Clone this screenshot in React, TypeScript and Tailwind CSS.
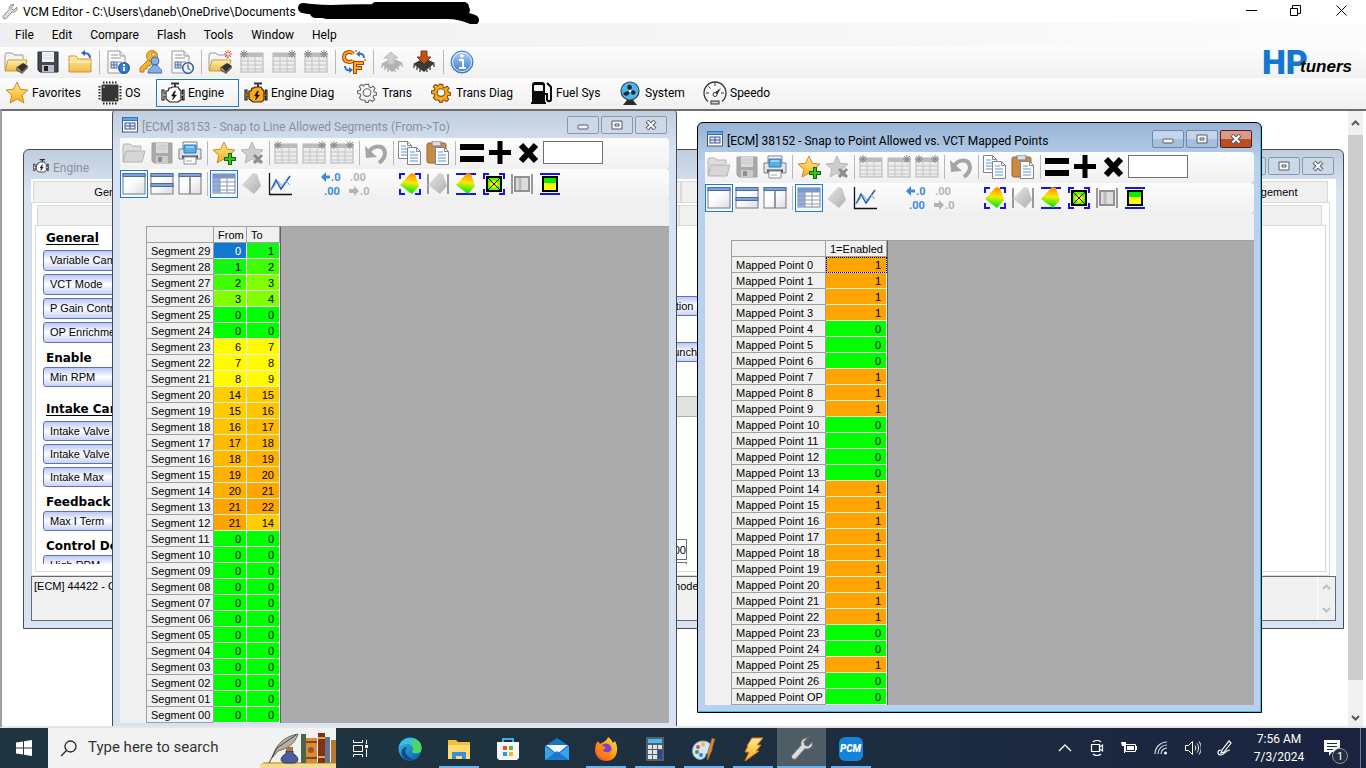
import type { ReactNode } from "react";
import { clsx } from "clsx";

type SvgProps = { children: ReactNode; size?: string; box?: string };

function Svg({ children, size = "size-6", box = "0 0 24 24" }: SvgProps) {
    return (
        <svg viewBox={box} className={clsx("shrink-0", size)} fill="none" aria-hidden="true">
            {children}
        </svg>
    );
}

// Gradients shared by all icons
function Gradients() {
    return (
        <svg className="absolute size-0" aria-hidden="true">
            <defs>
                <linearGradient id="folder" x1="0" y1="0" x2="0" y2="1">
                    <stop offset="0" stopColor="#fff0a8" />
                    <stop offset="1" stopColor="#eebb48" />
                </linearGradient>
                <linearGradient id="star" x1="0" y1="0" x2="0" y2="1">
                    <stop offset="0" stopColor="#ffe993" />
                    <stop offset="1" stopColor="#f3ae1c" />
                </linearGradient>
                <linearGradient id="blue" x1="0" y1="0" x2="0" y2="1">
                    <stop offset="0" stopColor="#b5d3f5" />
                    <stop offset="1" stopColor="#3977c6" />
                </linearGradient>
                <linearGradient id="surface" x1="0.6" y1="0" x2="0.5" y2="1">
                    <stop offset="0.1" stopColor="#ff9c00" />
                    <stop offset="0.45" stopColor="#ffe600" />
                    <stop offset="0.7" stopColor="#6cf000" />
                    <stop offset="1" stopColor="#00dc10" />
                </linearGradient>
                <linearGradient id="grey" x1="0" y1="0" x2="1" y2="1">
                    <stop offset="0" stopColor="#e6e6e6" />
                    <stop offset="1" stopColor="#b0b0b0" />
                </linearGradient>
                <linearGradient id="pane" x1="0" y1="0" x2="1" y2="1">
                    <stop offset="0.4" stopColor="#ffffff" />
                    <stop offset="1" stopColor="#dcdce2" />
                </linearGradient>
                <linearGradient id="edge" x1="0" y1="0" x2="1" y2="1">
                    <stop offset="0" stopColor="#35c1f1" />
                    <stop offset="1" stopColor="#0c59a4" />
                </linearGradient>
                <linearGradient id="fox" x1="1" y1="0" x2="0" y2="1">
                    <stop offset="0" stopColor="#ffe04a" />
                    <stop offset="0.5" stopColor="#ff980e" />
                    <stop offset="1" stopColor="#f0304b" />
                </linearGradient>
            </defs>
        </svg>
    );
}

const STAR = "M12 1l3.2 7.2 7.8.8-5.8 5.2 1.7 7.8L12 18l-6.9 4 1.7-7.8L1 9l7.8-.8z";

function TinyChip() {
    return (
        <>
            <path d="M13 17l6-4 5 3-6 6z" fill="#333" />
            <path d="M13 17v3l5 3v-2M18 23l6-6" stroke="#666" strokeWidth="1.500" />
        </>
    );
}

function OpenFolder({ grey = false }: { grey?: boolean }) {
    return (
        <>
            <path d="M1 20V5l1-2h6l2 2h9v4" fill={grey ? "#dedede" : "#f5f5f5"} stroke={grey ? "#b4b4b4" : "#999"} />
            <path d="M1 21l3-11h19l-3 11z" fill={grey ? "#d6d6d6" : "url(#folder)"} stroke={grey ? "#b4b4b4" : "#c99b36"} />
        </>
    );
}

function FolderChipIcon({ spark = false }: { spark?: boolean }) {
    return (
        <Svg>
            <OpenFolder />
            <TinyChip />
            {spark && (
                <>
                    <path d="M20 0v8M16 4h8M17 1l6 6M23 1l-6 6" stroke="#c2552a" />
                    <circle cx="20" cy="4" r="1.500" fill="#f5dccf" />
                </>
            )}
        </Svg>
    );
}

function SaveIcon({ grey = false }: { grey?: boolean }) {
    return (
        <Svg>
            <path d="M2 2h20v20H4l-2-2z" fill={grey ? "#a9a9a9" : "#46484f"} stroke={grey ? "#9f9f9f" : "#26272b"} />
            <rect x="6" y="2" width="12" height="10" fill={grey ? "#dadada" : "#f2f5f8"} />
            <path d="M7 5h10M7 8h10" stroke={grey ? "#c4c4c4" : "#cdd8e4"} />
            <rect x="6" y="15" width="12" height="7" fill={grey ? "#cacaca" : "#b8c0ca"} />
            <rect x="8" y="16" width="4" height="5" fill={grey ? "#8f8f8f" : "#222"} />
        </Svg>
    );
}

function FolderBackIcon() {
    return (
        <Svg>
            <path d="M1 22V6h7l2 3h13v13z" fill="url(#folder)" stroke="#c99b36" />
            <path d="M1 12h22" stroke="#fff8d2" />
            <path d="M22 8c0-4-2-5-6-5" stroke="#2a69b4" strokeWidth="2" />
            <path d="M17 0v6l-4-3z" fill="#2a69b4" />
        </Svg>
    );
}

function SheetIcon({ clock = false }: { clock?: boolean }) {
    return (
        <Svg>
            <path d="M2 1h12l5 5v17H2z" fill="#fafafa" stroke="#9b9b9b" />
            <path d="M14 1v5h5" stroke="#9b9b9b" fill="#e8e8e8" />
            <path d="M5 5h7M5 8h10M12 12h4" stroke="#999" />
            <rect x="5" y="12" width="6" height="6" fill="#dce8f6" stroke="#4d6c96" />
            <path d="M5 15h6M8 12v6" stroke="#4d6c96" />
            <circle cx="18" cy="18" r="5.3" fill={clock ? "#f2f7fd" : "#2f7ed8"} stroke="#2c61a5" strokeWidth="1.5" />
            {clock ? (
                <path d="M18 14.500v4l2.500 1.500" stroke="#333" />
            ) : (
                <path d="M18 17v4M18 14v2" stroke="#fff" strokeWidth="2" />
            )}
        </Svg>
    );
}

function KeyUserIcon() {
    return (
        <Svg>
            <path d="M12 8L2 18v4h4v-3h3v-3h3l3-4" fill="#f2b632" stroke="#b97c12" />
            <circle cx="14" cy="6" r="5.500" fill="#f2b632" stroke="#b97c12" />
            <circle cx="15.500" cy="4.500" r="1.800" fill="#fff" stroke="#b97c12" />
            <circle cx="17" cy="11" r="4" fill="#86aee0" stroke="#3f6cae" />
            <path d="M10 23c0-5 3-4 5-8h4c2 4 5 3 5 8z" fill="#86aee0" stroke="#3f6cae" />
        </Svg>
    );
}

function GridIcon({ left = false, right = false }: { left?: boolean; right?: boolean }) {
    return (
        <Svg>
            <rect x="1" y="3" width="22" height="19" fill="#ececec" stroke="#b4b4b4" />
            <rect x="1" y="3" width="22" height="4" fill="#bcbcbc" />
            <path d="M1 11h22M1 15h22M1 19h22M8 7v15M15 7v15" stroke="#c4c4c4" />
            {left && <path d="M4 0v8M0 4h8M1 1l6 6M7 1L1 7" stroke="#868686" />}
            {right && <path d="M20 0v8M16 4h8M17 1l6 6M23 1l-6 6" stroke="#868686" />}
        </Svg>
    );
}

function DegreesIcon() {
    return (
        <Svg>
            <path d="M11 4c-1-3-9-3-9 3s8 6 9 3" stroke="#a53e13" strokeWidth="4" />
            <path d="M11 4c-1-3-9-3-9 3s8 6 9 3" stroke="#ffab19" strokeWidth="2" />
            <path d="M13 24V13h9M13 18h7" stroke="#a53e13" strokeWidth="4" />
            <path d="M13 23V13h8M13 18h6" stroke="#ffab19" strokeWidth="2" />
            <path d="M17 4c3-1 5 1 5 4M3 16c0 3 2 5 5 4" stroke="#356fbd" strokeWidth="2" />
            <path d="M18 1v6l-4-3zM7 17v6l4-3z" fill="#356fbd" />
            <circle cx="14" cy="1" r="1" fill="#d46622" />
            <circle cx="23" cy="10" r="1" fill="#d46622" />
        </Svg>
    );
}

function ChipArrowIcon({ grey = false }: { grey?: boolean }) {
    return (
        <Svg>
            <path d="M1 14l11-6 11 5-11 9z" fill={grey ? "#b2b2b2" : "#3a3a3a"} />
            <path d="M2 15v3m3-1v3m3-1v3m7-2v2m3-5v3m4-6v3" stroke={grey ? "#b5b5b5" : "#555"} strokeWidth="1.500" />
            {grey ? (
                <path d="M11 2l7 6h-4v6H8V8H4z" fill="#cfcfcf" stroke="#bdbdbd" />
            ) : (
                <path d="M9 1h6v6h4l-7 7-7-7h4z" fill="#c1531a" stroke="#8a350b" />
            )}
        </Svg>
    );
}

function InfoIcon() {
    return (
        <Svg>
            <circle cx="12" cy="12" r="11" fill="url(#blue)" stroke="#4376b4" />
            <circle cx="12" cy="12" r="9.500" stroke="#d9e8fa" />
            <path d="M9 10h4v8m-4 0h7" stroke="#fff" strokeWidth="2" />
            <circle cx="12" cy="6" r="1.800" fill="#fff" />
        </Svg>
    );
}

function StarIcon({ badge, grey = false }: { badge?: "plus" | "cross"; grey?: boolean }) {
    return (
        <Svg>
            <path d={STAR} fill={grey ? "#cdcdcd" : "url(#star)"} stroke={grey ? "#b5b5b5" : "#c98c25"} />
            {badge === "plus" && <path d="M18 12v12M12 18h12" stroke="#0b6b0b" strokeWidth="4" />}
            {badge === "plus" && <path d="M18 13v10M13 18h10" stroke="#36c41c" strokeWidth="2" />}
            {badge === "cross" && <path d="M14 14l8 8M22 14l-8 8" stroke="#8c8c8c" strokeWidth="3" />}
        </Svg>
    );
}

function ChipIcon() {
    return (
        <Svg>
            <path d="M5 1.500h15M5 22.500h15M1.500 5v15M22.500 5v15" stroke="#222" strokeWidth="2" strokeDasharray="1.500 1.500" />
            <rect x="3.500" y="3.500" width="17" height="17" rx="1" fill="#333635" />
            <circle cx="6" cy="6" r="1" fill="#aaa" />
            <circle cx="18" cy="18" r="1" fill="#aaa" />
        </Svg>
    );
}

function EngineIcon({ fill = "#fff", size = "size-6" }: { fill?: string; size?: string }) {
    return (
        <Svg size={size}>
            <path d="M10 2.500h8M14 2.500V6" stroke="#333" strokeWidth="1.800" />
            <path d="M8 7h2l1-1h6l1 2 2 2v9l-3 2H9l-4-3v-8h2z" fill={fill} stroke="#222" strokeWidth="1.200" />
            <path d="M5 13H3V9H1v10h2v-4h2M20 13h1.500V9H23v10h-1.500v-4H20" fill={fill} stroke="#222" strokeWidth="1.200" />
            <path d="M13.500 10l-3 5h2l-1 4 4-5h-2.500l1.500-4z" fill="#111" stroke="#111" strokeWidth="0.500" />
        </Svg>
    );
}

function GearIcon({ fill = "none", stroke = "#666" }: { fill?: string; stroke?: string }) {
    return (
        <Svg box="-2 -1 28 28">
            <path
                d="M10 3h4l.5 3 2 .8L19 5l2.500 2.500-1.800 2.500.8 2 2.500.5v3l-3 .5-.8 2 1.800 2.500-2.500 2.500-2.500-1.800-2 .8-.5 2h-3l-.5-2-2-.8L5.500 21 3 18.500 4.800 16 4 14l-3-.5v-3L4 10l.8-2L3 5.500 5.500 3 8 4.800z"
                fill={fill}
                stroke={stroke}
                strokeWidth="1.300"
                strokeLinejoin="round"
            />
            <circle cx="12" cy="12.500" r="4.500" fill="#f7f7f7" stroke={stroke} strokeWidth="1.300" />
        </Svg>
    );
}

function FuelIcon() {
    return (
        <Svg>
            <path d="M3 21V4c0-2 1-3 3-3h7c2 0 3 1 3 3v17h1v2H2v-2z" fill="#0a0a0a" />
            <rect x="5" y="4" width="9" height="6" rx="1" fill="#f7f7f7" />
            <path d="M18 2l4 4v12c0 3-4 3-4 0v-5h-2" stroke="#0a0a0a" strokeWidth="2" />
        </Svg>
    );
}

function FanIcon() {
    return (
        <Svg>
            <path d="M9 19h6l4 5H5z" fill="#2b2b2b" />
            <circle cx="12" cy="10" r="9" fill="#4fb4ee" stroke="#33474f" strokeWidth="1.200" />
            <path d="M12 10c-4-2-3-7 0-6s2 4 0 6c4-2 7 1 5 3s-4 0-5-3c0 4-4 6-6 4s2-4 6-4" fill="#1e2a33" />
            <circle cx="12" cy="10" r="1.500" fill="#d8eefc" />
        </Svg>
    );
}

function GaugeIcon() {
    return (
        <Svg>
            <path d="M5 20.500A11 11 0 1119 20.500" stroke="#333" strokeWidth="1.300" />
            <path d="M12 2v3M3 12h3M21 12h-3M5.500 5.500l2 2" stroke="#333" />
            <path d="M18 7l-4 7-3-2z" fill="#333" />
            <circle cx="12" cy="13.500" r="2" stroke="#333" fill="#fff" />
            <rect x="8" y="20" width="8" height="3" fill="#ccc" stroke="#333" />
        </Svg>
    );
}

function PrintIcon() {
    return (
        <Svg>
            <path d="M5 9V1h14v8" fill="#fafafa" stroke="#7c8187" />
            <path d="M1 8h22v10H1z" fill="#e0e4e8" stroke="#7c8187" />
            <path d="M6 4h12v8H6z" fill="#54b1ea" stroke="#2c76b0" />
            <path d="M8 6h8" stroke="#9bd2f4" strokeWidth="2" />
            <path d="M4 16h16" stroke="#4d5359" strokeWidth="3" />
            <path d="M6 16h12v7H6z" fill="#fbfbfb" stroke="#8e9398" />
            <path d="M8 20h6" stroke="#aaa" />
        </Svg>
    );
}

function UndoIcon() {
    return (
        <Svg>
            <path d="M5 11c4-7 15-8 16 1 0 4-2 7-6 10" stroke="#a5a5a5" strokeWidth="4" />
            <path d="M1 5l1 12 11-1z" fill="#a5a5a5" />
        </Svg>
    );
}

function Sheet({ x, y }: { x: number; y: number }) {
    return (
        <g transform={`translate(${x} ${y})`}>
            <path d="M.5.500h9l4 4v13H.5z" fill="#fdfdfd" stroke="#7f858d" />
            <path d="M9.500.500v4h4" stroke="#7f858d" />
            <path d="M3 5h5M3 8h8M3 11h8M3 14h8" stroke="#5e93d3" />
        </g>
    );
}

function CopyIcon() {
    return (
        <Svg>
            <Sheet x={0} y={0} />
            <Sheet x={9} y={6} />
        </Svg>
    );
}

function PasteIcon() {
    return (
        <Svg>
            <rect x="1" y="2" width="19" height="20" rx="2" fill="#cb8a43" stroke="#98612a" />
            <rect x="6" y="0" width="9" height="5" rx="1" fill="#dadde0" stroke="#787d83" />
            <Sheet x={9} y={6} />
        </Svg>
    );
}

function PaneIcon({ split }: { split?: "rows" | "cols" }) {
    return (
        <Svg>
            <rect x="1" y="2" width="22" height="20" fill="url(#pane)" stroke="#77797f" />
            <rect x="1" y="1.500" width="22" height="3" fill="#7fa0da" stroke="#4a6cab" />
            {split === "rows" && <rect x="1" y="11.500" width="22" height="3" fill="#7fa0da" stroke="#4a6cab" />}
            {split === "cols" && <path d="M12 4v18" stroke="#77797f" strokeWidth="1.500" />}
        </Svg>
    );
}

function TableViewIcon() {
    return (
        <Svg>
            <rect x="1" y="2" width="22" height="19" fill="#fff" stroke="#7d828e" />
            <rect x="1" y="2" width="22" height="4" fill="#7397d5" />
            <rect x="1" y="6" width="7" height="15" fill="#94afe2" />
            <path d="M1 6h22M1 10h22M1 14h22M1 18h22M8 2v19M15 2v19" stroke="#8f97b0" />
        </Svg>
    );
}

const SURFACE = "M13 1l4 1 4 12-7 8L2 13z";

type Edge = "corners" | "sides" | "bars";

function EdgeMarks({ edge, color = "#1414f0" }: { edge: Edge; color?: string }) {
    const d = {
        corners: "M2 7V2h5M17 2h5v5M22 17v5h-5M7 22H2v-5",
        sides: "M2 2v20M22 2v20",
        bars: "M2 2h20M2 22h20",
    }[edge];
    return <path d={d} stroke={color} strokeWidth="2" />;
}

function SurfaceIcon({ edge, grey = false }: { edge?: Edge; grey?: boolean }) {
    return (
        <Svg>
            {edge && <EdgeMarks edge={edge} color={grey ? "#999" : undefined} />}
            <path d={SURFACE} fill={grey ? "url(#grey)" : "url(#surface)"} />
        </Svg>
    );
}

function LineChartIcon() {
    return (
        <Svg>
            <path d="M1.500 1v21.500H24" stroke="#111" strokeWidth="1.300" />
            <path d="M3 18l5-10 5 9 9-13" stroke="#1e5ea8" strokeWidth="1.500" />
            <path d="M3 18l7-9 4 5 4-5 4 4" stroke="#6d9fdb" />
        </Svg>
    );
}

function DecimalsIcon({ grey = false }: { grey?: boolean }) {
    const color = grey ? "#b3b3b3" : "#3d8bd8";
    return (
        <Svg>
            <g fill={color} fontFamily="Roboto, sans-serif" fontWeight="700" fontSize="11">
                <text x={grey ? 2 : 11} y="9">{grey ? ".00" : ".0"}</text>
                <text x={grey ? 12 : 4} y="23">{grey ? ".0" : ".00"}</text>
            </g>
            <path d={grey ? "M1 17h5v-3l5 5-5 5v-3H1z" : "M10 3.500H6V0L1 5l5 5V6.500h4z"} fill={color} />
        </Svg>
    );
}

function SquareCrossIcon() {
    return (
        <Svg>
            <EdgeMarks edge="corners" />
            <rect x="5" y="5" width="14" height="14" fill="#5df500" stroke="#000" strokeWidth="2" />
            <path d="M7 12l5-4 5 4-5 5z" fill="#ffe800" />
            <path d="M6 6l12 12M18 6L6 18" stroke="#111" />
        </Svg>
    );
}

function SquareSidesIcon() {
    return (
        <Svg>
            <EdgeMarks edge="sides" color="#999" />
            <rect x="5" y="5" width="14" height="14" fill="#dedede" stroke="#929292" strokeWidth="2" />
            <path d="M10 6v12" stroke="#bbb" strokeWidth="3" />
        </Svg>
    );
}

function SquareBarsIcon() {
    return (
        <Svg>
            <EdgeMarks edge="bars" />
            <rect x="5" y="5" width="14" height="14" fill="#fffb00" stroke="#000" strokeWidth="2" />
            <path d="M6 6h12v5H6z" fill="#00f000" />
        </Svg>
    );
}

function EqualsIcon() {
    return (
        <Svg>
            <path d="M0 6h24M0 18h24" stroke="#000" strokeWidth="6" />
        </Svg>
    );
}

function PlusIcon() {
    return (
        <Svg>
            <path d="M12 0v23M1 11.500h22" stroke="#000" strokeWidth="5" />
        </Svg>
    );
}

function TimesIcon() {
    return (
        <Svg>
            <path d="M5 4l15 16M20 4L5 20" stroke="#000" strokeWidth="6" />
        </Svg>
    );
}

function WrenchIcon({ size = "size-4" }: { size?: string }) {
    return (
        <Svg size={size}>
            <path
                d="M22 5l-4 4-3-1-1-3 4-4c-5-1-8 3-7 7L2 18c-2 3 1 5 4 4l9-10c5 1 9-3 7-7z"
                fill="#dedede"
                stroke="#6c6c6c"
                strokeWidth="1.200"
            />
        </Svg>
    );
}

function FormIcon() {
    return (
        <Svg size="size-4" box="0 0 16 16">
            <rect x="0.500" y="1" width="15" height="14" fill="#fbfbfb" stroke="#4c596f" />
            <rect x="0.500" y="0.500" width="15" height="3" fill="#65a4e8" stroke="#3972b4" />
            <rect x="3" y="6" width="10" height="6" fill="#dfe8fa" stroke="#44588f" />
            <path d="M3 9h10M8 6v6" stroke="#44588f" />
        </Svg>
    );
}

function Separator() {
    return (
        <div className="flex h-6 w-[6px] justify-center">
            <div className="w-px bg-[#b9b9b9]" />
        </div>
    );
}

function ToolButton({ label, active = false, children }: { label: string; active?: boolean; children: ReactNode }) {
    return (
        <button
            type="button"
            aria-label={label}
            className={clsx("flex h-7 w-7 items-center justify-center border", active ? "border-[#1a7bd0] bg-[#f4f9fe]" : "border-transparent")}
        >
            {children}
        </button>
    );
}

function MainToolButton({ label, children }: { label: string; children: ReactNode }) {
    return (
        <button type="button" aria-label={label} className="flex h-7 w-8 items-center justify-center">
            {children}
        </button>
    );
}

function TitleBar() {
    return (
        <div className="flex h-[23px] shrink-0 items-center bg-white pl-[2px]">
            <WrenchIcon />
            <div className="relative ml-[5px] whitespace-nowrap pr-1">
                VCM Editor - C:\Users\daneb\OneDrive\Documents
                <svg viewBox="0 0 184 24" className="absolute left-full top-0 -ml-1 -mt-1 h-6 w-[184px]" aria-hidden="true">
                    <path
                        d="M7 8c20 4 40 1 70 1s60-3 92 1c-40 3-80 2-150 3M80 7h88M30 14h120c14 0 20 3 28 6"
                        fill="none"
                        stroke="#000"
                        strokeWidth="10"
                        strokeLinecap="round"
                        strokeLinejoin="round"
                    />
                </svg>
            </div>
            <div className="ml-auto flex h-full items-center pb-0.5">
                <button type="button" aria-label="Minimize" className="flex w-[46px] justify-center">
                    <Svg size="size-[11px]" box="0 0 11 11"><path d="M0 5.500h11" stroke="#000" /></Svg>
                </button>
                <button type="button" aria-label="Restore" className="flex w-[42px] justify-center">
                    <Svg size="size-[11px]" box="0 0 11 11">
                        <path d="M.5 3.500h7v7h-7zM2.500 3V.500h8v8H8" stroke="#000" />
                    </Svg>
                </button>
                <button type="button" aria-label="Close" className="flex w-[50px] justify-center">
                    <Svg size="size-[11px]" box="0 0 11 11"><path d="M.5.500l10 10M10.500.500l-10 10" stroke="#000" /></Svg>
                </button>
            </div>
        </div>
    );
}

const MENUS = ["File", "Edit", "Compare", "Flash", "Tools", "Window", "Help"];

function MenuBar() {
    return (
        <nav className="flex h-6 shrink-0 items-center gap-[18px] bg-linear-to-r from-[#efefef] to-[#fbfcfc] pl-[15px]">
            {MENUS.map((menu) => (
                <button key={menu} type="button">{menu}</button>
            ))}
        </nav>
    );
}

function MainToolbar() {
    return (
        <div className="flex h-[31px] shrink-0 items-center bg-linear-to-b from-[#fdfdfd] to-[#f0f0f0] pb-0.5">
            <MainToolButton label="Open"><FolderChipIcon /></MainToolButton>
            <MainToolButton label="Save"><SaveIcon /></MainToolButton>
            <MainToolButton label="Reopen"><FolderBackIcon /></MainToolButton>
            <Separator />
            <MainToolButton label="File info"><SheetIcon /></MainToolButton>
            <MainToolButton label="Licensing"><KeyUserIcon /></MainToolButton>
            <MainToolButton label="History"><SheetIcon clock /></MainToolButton>
            <Separator />
            <MainToolButton label="Open compare"><FolderChipIcon spark /></MainToolButton>
            <MainToolButton label="Compare first"><GridIcon left /></MainToolButton>
            <MainToolButton label="Compare second"><GridIcon right /></MainToolButton>
            <MainToolButton label="Compare both"><GridIcon left right /></MainToolButton>
            <Separator />
            <MainToolButton label="Units"><DegreesIcon /></MainToolButton>
            <Separator />
            <MainToolButton label="Read vehicle"><ChipArrowIcon grey /></MainToolButton>
            <MainToolButton label="Write vehicle"><ChipArrowIcon /></MainToolButton>
            <Separator />
            <MainToolButton label="Info"><InfoIcon /></MainToolButton>
            <div className="ml-auto mr-3.5 flex items-end">
                <span className="font-[Roboto,sans-serif] text-[34px] font-black leading-[28px] text-[#1277cf]">HP</span>
                <span className="-ml-2 font-['Liberation_Sans',sans-serif] text-[17px] font-bold italic leading-[18px] text-black">tuners</span>
            </div>
        </div>
    );
}

const CATEGORIES = [
    { name: "Favorites", width: "w-[93px]", icon: <StarIcon /> },
    { name: "OS", width: "w-[63px]", icon: <ChipIcon /> },
    { name: "Engine", width: "w-[83px]", icon: <EngineIcon />, active: true },
    { name: "Engine Diag", width: "w-[111px]", icon: <EngineIcon fill="#ffa814" /> },
    { name: "Trans", width: "w-[74px]", icon: <GearIcon /> },
    { name: "Trans Diag", width: "w-[100px]", icon: <GearIcon fill="#ffa814" stroke="#7a5210" /> },
    { name: "Fuel Sys", width: "w-[89px]", icon: <FuelIcon /> },
    { name: "System", width: "w-[85px]", icon: <FanIcon /> },
    { name: "Speedo", width: "w-[83px]", icon: <GaugeIcon /> },
];

function CategoryBar() {
    return (
        <div className="flex h-[31px] shrink-0 items-center bg-linear-to-b from-[#fdfdfd] to-[#f0f0f0] pb-0.5">
            {CATEGORIES.map(({ name, width, icon, active }) => (
                <button
                    key={name}
                    type="button"
                    className={clsx("flex h-7 items-center gap-[3px] whitespace-nowrap border pl-1", width, active ? "border-[#1a7bd0]" : "border-transparent")}
                >
                    {icon}
                    {name}
                </button>
            ))}
        </div>
    );
}

function CaptionButton({ kind, frontmost }: { kind: "min" | "max" | "close"; frontmost: boolean }) {
    return (
        <button
            type="button"
            aria-label={kind}
            className={clsx(
                "flex h-[18px] w-8 items-center justify-center rounded-xs border",
                frontmost && kind === "close"
                    ? "border-[#5c1a24] bg-linear-to-b from-[#dc9a86] from-50% to-[#b9501f] to-50%"
                    : frontmost
                      ? "border-[#7487a5] bg-linear-to-b from-[#c3d5ec] from-50% to-[#a5bedd] to-50%"
                      : "border-[#8a98ad] bg-[#cbd8e8]",
            )}
        >
            <Svg size="h-[10px] w-3" box="0 0 12 10">
                {kind === "min" && <rect x="1" y="5" width="10" height="4" rx="1" fill="#f6f6f6" stroke="#555c68" />}
                {kind === "max" && <path d="M1 1h10v8H1zM4 4h4v2H4z" fill="#f6f6f6" stroke="#555c68" />}
                {kind === "close" && (
                    <>
                        <path d="M2 1l8 8M10 1L2 9" stroke="#555c68" strokeWidth="4" />
                        <path d="M2.500 1.500l7 7M9.500 1.500l-7 7" stroke="#fff" strokeWidth="2" />
                    </>
                )}
            </Svg>
        </button>
    );
}

type ChildWindowProps = {
    title: string;
    icon: ReactNode;
    place: string;
    frontmost?: boolean;
    children: ReactNode;
};

function ChildWindow({ title, icon, place, frontmost = false, children }: ChildWindowProps) {
    return (
        <section
            className={clsx(
                "absolute rounded-t-md border px-[7px] pb-[7px]",
                frontmost
                    ? "border-black bg-[#b9d1ec] bg-linear-to-b from-[#98b3d4] to-[#b9d1ec] to-[40px] shadow-[inset_-1px_-1px_0_#2fc3ee]"
                    : "border-[#4c4c50] bg-[#d7e3f3] bg-linear-to-b from-[#c0cddc] to-[#d7e3f3] to-[40px]",
                place,
            )}
        >
            <header className="flex h-[29px] items-center gap-1 px-0.5 pb-px pt-1">
                {icon}
                <h2 className={clsx("whitespace-nowrap pt-[3px]", frontmost ? "text-black" : "text-[#8b9199]")}>{title}</h2>
                <div className="ml-auto flex gap-0.5">
                    <CaptionButton kind="min" frontmost={frontmost} />
                    <CaptionButton kind="max" frontmost={frontmost} />
                    <CaptionButton kind="close" frontmost={frontmost} />
                </div>
            </header>
            {children}
        </section>
    );
}

function TableToolbars() {
    return (
        <>
            <div className="flex h-[31px] items-center rounded-r-sm bg-linear-to-b from-[#fdfdfd] to-[#f0f0f0] pb-0.5">
                <ToolButton label="Open"><Svg><OpenFolder grey /></Svg></ToolButton>
                <ToolButton label="Save"><SaveIcon grey /></ToolButton>
                <ToolButton label="Print"><PrintIcon /></ToolButton>
                <Separator />
                <ToolButton label="Add favorite"><StarIcon badge="plus" /></ToolButton>
                <ToolButton label="Remove favorite"><StarIcon badge="cross" grey /></ToolButton>
                <Separator />
                <ToolButton label="Compare first"><GridIcon left /></ToolButton>
                <ToolButton label="Compare second"><GridIcon right /></ToolButton>
                <ToolButton label="Compare both"><GridIcon left right /></ToolButton>
                <Separator />
                <ToolButton label="Undo"><UndoIcon /></ToolButton>
                <Separator />
                <ToolButton label="Copy"><CopyIcon /></ToolButton>
                <ToolButton label="Paste"><PasteIcon /></ToolButton>
                <Separator />
                <ToolButton label="Set value"><EqualsIcon /></ToolButton>
                <ToolButton label="Add value"><PlusIcon /></ToolButton>
                <ToolButton label="Multiply value"><TimesIcon /></ToolButton>
                <input aria-label="Value" className="ml-px h-[23px] w-[60px] border border-[#707070] bg-white px-1" />
            </div>
            <div className="flex h-[31px] items-center rounded-r-sm bg-linear-to-b from-[#fdfdfd] to-[#f0f0f0] pb-0.5">
                <ToolButton label="Single pane" active><PaneIcon /></ToolButton>
                <ToolButton label="Split rows"><PaneIcon split="rows" /></ToolButton>
                <ToolButton label="Split columns"><PaneIcon split="cols" /></ToolButton>
                <Separator />
                <ToolButton label="Table view" active><TableViewIcon /></ToolButton>
                <ToolButton label="Surface view"><SurfaceIcon grey /></ToolButton>
                <ToolButton label="Chart view"><LineChartIcon /></ToolButton>
                <div className="ml-6 mr-[22px] flex">
                    <ToolButton label="Increase decimals"><DecimalsIcon /></ToolButton>
                    <ToolButton label="Decrease decimals"><DecimalsIcon grey /></ToolButton>
                </div>
                <ToolButton label="Interpolate"><SurfaceIcon edge="corners" /></ToolButton>
                <ToolButton label="Interpolate horizontal"><SurfaceIcon edge="sides" grey /></ToolButton>
                <ToolButton label="Interpolate vertical"><SurfaceIcon edge="bars" /></ToolButton>
                <ToolButton label="Fill"><SquareCrossIcon /></ToolButton>
                <ToolButton label="Fill horizontal"><SquareSidesIcon /></ToolButton>
                <ToolButton label="Fill vertical"><SquareBarsIcon /></ToolButton>
            </div>
        </>
    );
}

const HEAD = "h-4 overflow-hidden border-b border-r border-[#a0a0a0] bg-[#f0f0f0] pb-0 pr-0 pt-px text-left font-normal leading-[14px] whitespace-nowrap";
const CELL = "h-4 overflow-hidden border-b border-r border-[#ececec] pb-0 pl-0 pr-[5px] pt-px text-right leading-[14px]";

function DataGrid({ children }: { children: ReactNode }) {
    return (
        <div className="flex bg-[#f0f0f0] pl-[26px] pt-[26px] font-['Liberation_Sans',Arial,sans-serif] text-[11px]">
            {children}
            <div className="flex-1 border-t border-[#a0a0a0] bg-[#ababab]" />
        </div>
    );
}

// From / To pairs, highest segment first
const SEGMENTS = [
    [0, 1], [1, 2], [2, 3], [3, 4], [0, 0], [0, 0], [6, 7], [7, 8], [8, 9], [14, 15],
    [15, 16], [16, 17], [17, 18], [18, 19], [19, 20], [20, 21], [21, 22], [21, 14],
    [0, 0], [0, 0], [0, 0], [0, 0], [0, 0], [0, 0], [0, 0], [0, 0], [0, 0], [0, 0], [0, 0], [0, 0],
];

function heat(value: number) {
    if (value >= 21) return "bg-[#ffa500]";
    if (value >= 19) return "bg-[#ffb000]";
    if (value >= 17) return "bg-[#ffba00]";
    if (value >= 16) return "bg-[#ffc400]";
    if (value >= 14) return "bg-[#ffcc00]";
    if (value >= 6) return "bg-[#fffa00]";
    if (value >= 3) return "bg-[#80ff00]";
    if (value === 2) return "bg-[#40ff00]";
    if (value === 1) return "bg-[#12f812]";
    return "bg-[#00ff00]";
}

function SegmentTable() {
    return (
        <table className="w-[135px] table-fixed border-separate border-spacing-0 border-l border-r border-t border-l-[#a0a0a0] border-r-[#606060] border-t-[#a0a0a0]">
            <colgroup>
                <col className="w-[67px]" />
                <col className="w-[33px]" />
                <col className="w-[33px]" />
            </colgroup>
            <thead>
                <tr>
                    <th className={HEAD} />
                    <th className={clsx(HEAD, "pl-1")}>From</th>
                    <th className={clsx(HEAD, "pl-1")}>To</th>
                </tr>
            </thead>
            <tbody>
                {SEGMENTS.map(([from, to], i) => (
                    <tr key={i}>
                        <th className={clsx(HEAD, "pl-1")}>Segment {String(29 - i).padStart(2, "0")}</th>
                        <td className={clsx(CELL, i === 0 ? "bg-[#1277cf] text-white" : heat(from))}>{from}</td>
                        <td className={clsx(CELL, heat(to))}>{to}</td>
                    </tr>
                ))}
            </tbody>
        </table>
    );
}

const POINTS = [1, 1, 1, 1, 0, 0, 0, 1, 1, 1, 0, 0, 0, 0, 1, 1, 1, 1, 1, 1, 1, 1, 1, 0, 0, 1, 0, 0];

function PointTable() {
    return (
        <table className="w-[157px] table-fixed border-separate border-spacing-0 border-l border-r border-t border-l-[#a0a0a0] border-r-[#606060] border-t-[#a0a0a0]">
            <colgroup>
                <col className="w-[94px]" />
                <col className="w-[61px]" />
            </colgroup>
            <thead>
                <tr>
                    <th className={HEAD} />
                    <th className={clsx(HEAD, "pl-1")}>1=Enabled</th>
                </tr>
            </thead>
            <tbody>
                {POINTS.map((enabled, i) => (
                    <tr key={i}>
                        <th className={clsx(HEAD, "pl-1")}>Mapped Point {i === 27 ? "OP" : i}</th>
                        <td
                            className={clsx(
                                CELL,
                                enabled ? "bg-[#ffa500]" : "bg-[#00ff00]",
                                i === 0 && "outline-1 -outline-offset-1 outline-dotted outline-black",
                            )}
                        >
                            {enabled}
                        </td>
                    </tr>
                ))}
            </tbody>
        </table>
    );
}

function ParamButton({ tall = false, children }: { tall?: boolean; children: ReactNode }) {
    return (
        <button
            type="button"
            className={clsx(
                "mb-[3px] block w-[150px] shrink-0 rounded-[3px] border border-[#5f70c0] bg-linear-to-b from-[#bcc8f2] via-white to-[#c9d2f4] pl-1.5 text-left",
                tall ? "h-[21px]" : "h-5",
            )}
        >
            {children}
        </button>
    );
}

function Heading({ sub = false, size, children }: { sub?: boolean; size: string; children: ReactNode }) {
    return (
        <h3
            className={clsx(
                "flex items-end pl-[3px] font-['DejaVu_Sans',Verdana,sans-serif] text-xs font-bold leading-4",
                sub ? "pb-px" : "pb-1 underline underline-offset-2",
                size,
            )}
        >
            {children}
        </h3>
    );
}

const ENGINE_TABS = ["General", "Airflow", "Idle", "Fuel", "Spark", "Cylinders", "Oil", "Torque Management"];

function EngineWindow() {
    return (
        <ChildWindow title="Engine" icon={<EngineIcon size="size-4" />} place="left-[21px] right-1 top-[38px]">
            <div className="font-['Liberation_Sans',Arial,sans-serif] text-[11px]">
                <div className="bg-white pt-0.5">
                    <div className="grid grid-cols-8 pl-0.5 pr-2">
                        {ENGINE_TABS.map((tab) => (
                            <button key={tab} type="button" className="h-[21px] whitespace-nowrap border border-b-0 border-[#d9d9d9] bg-[#f0f0f0]">
                                {tab}
                            </button>
                        ))}
                    </div>
                    <div className="mr-1.5 border border-[#d9d9d9] px-[3px] pb-[3px] pt-0.5">
                        <div className="grid h-5 grid-cols-2 pl-0.5 pr-1">
                            <div className="border border-b-0 border-[#d9d9d9] bg-[#f0f0f0]" />
                            <div className="border border-b-0 border-l-0 border-[#d9d9d9] bg-[#f0f0f0]" />
                        </div>
                        <div className="border border-[#d9d9d9] bg-white pb-[7px] pl-[7px]">
                            <div className="flex h-[338px] overflow-hidden">
                                <div className="w-[593px] shrink-0">
                                    <Heading size="h-6">General</Heading>
                                    <ParamButton tall>Variable Cam</ParamButton>
                                    <ParamButton tall>VCT Mode</ParamButton>
                                    <ParamButton tall>P Gain Control</ParamButton>
                                    <ParamButton tall>OP Enrichment</ParamButton>
                                    <Heading sub size="h-[21px]">Enable</Heading>
                                    <ParamButton>Min RPM</ParamButton>
                                    <Heading size="h-[31px]">Intake Cam</Heading>
                                    <ParamButton>Intake Valve</ParamButton>
                                    <ParamButton>Intake Valve</ParamButton>
                                    <ParamButton>Intake Max</ParamButton>
                                    <Heading sub size="h-[21px]">Feedback</Heading>
                                    <ParamButton>Max I Term</ParamButton>
                                    <Heading sub size="h-[21px]">Control Delay</Heading>
                                    <ParamButton>High RPM</ParamButton>
                                </div>
                                <div className="flex w-[180px] flex-col pt-[70px]">
                                    <div className="shrink-0 pl-4"><ParamButton><span className="pl-0.5">Option</span></ParamButton></div>
                                    <div className="shrink-0 pl-4 pt-[23px]"><ParamButton><span className="pl-0.5">Launch</span></ParamButton></div>
                                    <div className="mt-[31px] h-[21px] shrink-0 border-y border-[#acacac] bg-[#e1e1e1]" />
                                    <input aria-label="Launch value" readOnly value="1.00" className="mt-[122px] h-[21px] w-[51px] shrink-0 border border-[#707070] text-right" />
                                    <input aria-label="Launch limit" readOnly value="" className="mt-[2px] h-[21px] w-[51px] shrink-0 border border-[#707070]" />
                                </div>
                            </div>
                        </div>
                    </div>
                </div>
                <div className="flex h-[45px] border border-[#696969] bg-[#f0f0f0] pl-0.5">
                    <p className="w-[637px] pt-0.5">[ECM] 44422 - OP</p>
                    <p className="pt-0.5">mode</p>
                    <div className="ml-auto flex w-[18px] flex-col items-center justify-between border-l border-white py-1.5">
                        <Svg size="size-[9px]" box="0 0 9 9"><path d="M1 6l3.500-3.500L8 6" stroke="#bfbfbf" strokeWidth="2" /></Svg>
                        <Svg size="size-[9px]" box="0 0 9 9"><path d="M1 3l3.500 3.500L8 3" stroke="#bfbfbf" strokeWidth="2" /></Svg>
                    </div>
                </div>
            </div>
        </ChildWindow>
    );
}

function Workspace() {
    return (
        <main className="flex min-h-0 flex-1 border-b-2 border-l-2 border-t-2 border-b-[#e6e6e6] border-l-[#a0a0a0] border-t-[#6d6d6d] bg-white">
            <div className="relative flex-1 overflow-hidden">
                <EngineWindow />
                <ChildWindow
                    title="[ECM] 38153 - Snap to Line Allowed Segments (From->To)"
                    icon={<FormIcon />}
                    place="-top-[3px] left-[110px] w-[565px]"
                >
                    <TableToolbars />
                    <DataGrid><SegmentTable /></DataGrid>
                </ChildWindow>
                <ChildWindow
                    title="[ECM] 38152 - Snap to Point Allowed vs. VCT Mapped Points"
                    icon={<FormIcon />}
                    place="left-[695px] top-[11px] w-[565px]"
                    frontmost
                >
                    <TableToolbars />
                    <DataGrid><PointTable /></DataGrid>
                </ChildWindow>
            </div>
            <div className="mr-[3px] flex w-[15px] flex-col items-center bg-[#f0f0f0]">
                <div className="flex h-6 items-center">
                    <Svg size="size-[9px]" box="0 0 9 9"><path d="M1 6l3.500-3.500L8 6" stroke="#505860" strokeWidth="2" /></Svg>
                </div>
                <div className="w-full flex-1 bg-[#cdcdcd]" />
                <div className="flex h-[46px] items-end pb-1">
                    <Svg size="size-[9px]" box="0 0 9 9"><path d="M1 3l3.500 3.500L8 3" stroke="#505860" strokeWidth="2" /></Svg>
                </div>
            </div>
        </main>
    );
}

function BooksArt() {
    return (
        <svg viewBox="0 0 76 40" className="ml-auto h-10 w-[76px] shrink-0" aria-hidden="true">
            <path d="M0 36l8-2h68v6H0z" fill="#f1dc95" />
            <path d="M4 34h72v2H2z" fill="#dcae59" />
            <path d="M12 30C15 20 21 9 38 6c-3 9-9 14-20 17z" fill="#b5b0a8" stroke="#6b655d" />
            <path d="M9 35l8-15L36 7" stroke="#4c443c" fill="none" />
            <path d="M26 23h7v3c6 2 7 9 0 9h-7c-7 0-6-7 0-9z" fill="#4c5d9c" stroke="#2d3765" />
            <path d="M26 19h7v4h-7z" fill="#b0733f" />
            <rect x="41" y="6" width="5" height="29" fill="#47664a" />
            <rect x="46" y="10" width="11" height="25" fill="#d98b36" />
            <path d="M46 14h11M46 30h11" stroke="#84451a" strokeWidth="2" />
            <circle cx="51" cy="22" r="3" fill="#9c5720" />
            <rect x="58" y="5" width="7" height="30" fill="#7c3318" />
            <path d="M58 10h7M58 29h7" stroke="#e2a452" strokeWidth="2" />
            <rect x="65" y="9" width="5" height="26" fill="#60748d" />
            <rect x="71" y="12" width="5" height="23" fill="#b77832" />
        </svg>
    );
}

function EdgeBrowserIcon() {
    return (
        <Svg>
            <circle cx="12" cy="12" r="11.500" fill="url(#edge)" />
            <path d="M5 4c9-7 20-1 18 8-1 4-7 5-9 3 3-5-1-8-5-8-3 0-6 1-8 4 0-3 2-6 4-7z" fill="#35c5d8" />
            <path d="M15 2c7 1 10 7 8 12-1 3-7 3-9 1 3-4 1-7-1-8 3-1 4-3 2-5z" fill="#4fd75c" />
            <path d="M9 10c-4 5 0 11 7 12-4 2-10 1-12-4s2-8 5-8z" fill="#114a8b" />
        </Svg>
    );
}

function ExplorerIcon() {
    return (
        <Svg>
            <path d="M1 3h8l2 2h12v17H1z" fill="#f4bd3b" />
            <path d="M1 8h22v14H1z" fill="#ffdc70" />
            <path d="M5 22v-7h14v7h-4v-3H9v3z" fill="#3a8ee0" />
        </Svg>
    );
}

function StoreIcon() {
    return (
        <Svg>
            <path d="M7 6V2h10v4" stroke="#36b0ee" strokeWidth="2" />
            <path d="M1 5h22v16l-2 2H3l-2-2z" fill="#f5f5f5" />
            <path d="M7 9h4v4H7z" fill="#e2552e" />
            <path d="M13 9h4v4h-4z" fill="#75b52b" />
            <path d="M7 15h4v4H7z" fill="#2f9ce8" />
            <path d="M13 15h4v4h-4z" fill="#f7b51c" />
        </Svg>
    );
}

function MailIcon() {
    return (
        <Svg>
            <path d="M0 9l12-8 12 8v14H0z" fill="#1c72c4" />
            <path d="M1 8h22L12 17z" fill="#f3f9ff" />
            <path d="M0 9l12 9 12-9v14H0z" fill="#35a4ec" />
            <path d="M0 23L12 14l12 9z" fill="#1b79cf" />
        </Svg>
    );
}

function FirefoxIcon() {
    return (
        <Svg>
            <path d="M14 0c3 2 4 4 5 6l2-2c4 7 3 19-8 20C3 24-1 16 2 7l2-3 2 3c3-2 7-3 8-7z" fill="url(#fox)" />
            <circle cx="12" cy="12" r="5.500" fill="#7c3fd1" />
            <path d="M3 10c4-3 7-1 9 1l-3 2c1 3 6 3 8 0 0 6-5 8-9 7-5-2-6-6-5-10z" fill="#ff8416" />
        </Svg>
    );
}

function CalculatorIcon() {
    return (
        <Svg>
            <rect x="3" y="0" width="18" height="24" rx="1" fill="#565f67" />
            <rect x="5" y="2" width="14" height="4" fill="#3fc0f1" />
            <path d="M5 10h14M5 15h14M5 20h14" stroke="#dce3e9" strokeWidth="4" strokeDasharray="4 1" />
            <rect x="15" y="13" width="4" height="9" fill="#24469b" />
        </Svg>
    );
}

function PaintIcon() {
    return (
        <Svg>
            <path d="M11 4C3 4-1 11 1 17s9 7 12 3c1-3 1-4 4-4 5-1 4-12-6-12z" fill="#cfe6f7" stroke="#7fa5c5" />
            <circle cx="6" cy="10" r="2" fill="#e34b3b" />
            <circle cx="11" cy="7.500" r="2" fill="#f5b62c" />
            <circle cx="5" cy="15" r="2" fill="#43a047" />
            <circle cx="9" cy="18" r="2" fill="#3c7de0" />
            <path d="M20 1l3 1-4 13-3 8-1-1 1-8z" fill="#d98a3e" stroke="#8a5222" strokeWidth="0.600" />
        </Svg>
    );
}

function BoltIcon() {
    return (
        <Svg>
            <path d="M11 1h11l-6 7h4l-5 6h3L4 24l4-9H4l3-6H6z" fill="url(#star)" stroke="#e87b16" />
        </Svg>
    );
}

const APPS: { name: string; icon: ReactNode; running?: boolean; current?: boolean }[] = [
    { name: "Edge", icon: <EdgeBrowserIcon /> },
    { name: "File Explorer", icon: <ExplorerIcon />, running: true },
    { name: "Store", icon: <StoreIcon /> },
    { name: "Mail", icon: <MailIcon /> },
    { name: "Firefox", icon: <FirefoxIcon />, running: true },
    { name: "Calculator", icon: <CalculatorIcon />, running: true },
    { name: "Paint", icon: <PaintIcon />, running: true },
    { name: "Power", icon: <BoltIcon />, running: true },
    { name: "VCM Editor", icon: <WrenchIcon size="size-6" />, running: true, current: true },
    {
        name: "PCM app",
        icon: (
            <span className="flex size-6 items-center justify-center rounded-md bg-[#1583dc] text-[10px] font-black italic leading-none text-white">PCM</span>
        ),
        running: true,
    },
];

function TrayButton({ label, children }: { label: string; children: ReactNode }) {
    return (
        <button type="button" aria-label={label} className="flex h-10 w-8 items-center justify-center">
            <Svg size="size-4" box="0 0 16 16">{children}</Svg>
        </button>
    );
}

function Taskbar() {
    return (
        <footer className="flex h-10 shrink-0 bg-linear-to-r from-[#203540] via-[#1e303f] to-[#1a2340] text-white">
            <button type="button" aria-label="Start" className="flex w-12 items-center justify-center">
                <Svg size="size-4" box="0 0 16 16">
                    <path d="M0 2.500L7 1.500v6H0zM8 1.300L16 0v7.500H8zM0 8.500h7v6l-7-1zM8 8.500h8V16l-8-1.300z" fill="#fff" />
                </Svg>
            </button>
            <label className="flex w-[288px] items-center bg-[#f2f2f2] pl-3">
                <Svg size="size-[17px]" box="0 0 17 17">
                    <circle cx="10.500" cy="6.500" r="5.500" stroke="#222" strokeWidth="1.300" />
                    <path d="M6.500 10.500L1 16" stroke="#222" strokeWidth="1.300" />
                </Svg>
                <input
                    aria-label="Search"
                    placeholder="Type here to search"
                    className="ml-[11px] min-w-0 flex-1 bg-transparent text-[15px] text-black placeholder:text-[#333] outline-none"
                />
                <BooksArt />
            </label>
            <button type="button" aria-label="Task View" className="flex w-[49px] items-center justify-center">
                <Svg size="size-[17px]" box="0 0 17 17">
                    <path d="M1.500 0v2.500h9V0M1.500 17v-2.500h9V17M1.500 5.500h9v6h-9zM14.500 0v4M14.500 9v8" stroke="#fff" />
                    <rect x="13" y="5" width="3" height="3" fill="#fff" />
                </Svg>
            </button>
            {APPS.map(({ name, icon, running, current }) => (
                <button key={name} type="button" aria-label={name} className={clsx("flex w-[49px] flex-col items-center justify-end", current && "bg-[#4e5c65]")}>
                    <span className="flex h-[37px] items-center pt-0.5">{icon}</span>
                    <span className={clsx("h-0.5", current ? "w-full" : "w-10", running && "bg-[#6cb2ec]")} />
                </button>
            ))}
            <div className="ml-auto flex items-center">
                <TrayButton label="Show hidden icons"><path d="M2 11l6-6 6 6" stroke="#fff" strokeWidth="1.300" /></TrayButton>
                <TrayButton label="Meet now">
                    <path d="M4 2c2-2 6-2 8 0M4 14c2 2 6 2 8 0M2.500 4.500h8v7h-8zM10.500 7l3-2v6l-3-2" stroke="#fff" strokeWidth="1.200" />
                </TrayButton>
                <TrayButton label="Battery">
                    <path d="M4.500 4.500h10v7h-10zM15.500 6v4" stroke="#fff" />
                    <path d="M6 6h7v4H6zM0 2h5v3H4v8H3V6H1z" fill="#fff" />
                </TrayButton>
                <TrayButton label="Network">
                    <path d="M2 14A12 12 0 0114 2M5 14a9 9 0 019-9M8 14a6 6 0 016-6" stroke="#d5dae0" strokeWidth="1.200" />
                    <circle cx="12.500" cy="13" r="1.500" fill="#fff" />
                </TrayButton>
                <TrayButton label="Volume">
                    <path d="M.5 5.500h3l4-4v13l-4-4h-3zM10 5.500c1 1 1 4 0 5M12 3.500c2 2 2 7 0 9M14 1.500c3 4 3 9 0 13" stroke="#fff" />
                </TrayButton>
                <TrayButton label="Pen">
                    <path d="M12 1l2 2-7 9-3 1 1-3zM4 10c-4 0-4 5 0 5 4 0 4-5 9-5" stroke="#fff" strokeWidth="1.200" />
                </TrayButton>
                <div className="w-[76px] text-center leading-[18px]">
                    <div>7:56 AM</div>
                    <div>7/3/2024</div>
                </div>
                <button type="button" aria-label="Notifications" className="relative ml-[7px] flex h-10 w-9 items-center">
                    <Svg size="size-4" box="0 0 16 16">
                        <path d="M0 0h16v12H8l-3 4v-4H0z" fill="#fff" />
                        <path d="M3 3.500h10M3 6.500h10M3 9.500h6" stroke="#1b2a40" />
                    </Svg>
                    <span className="absolute left-[8px] top-5 flex size-4 items-center justify-center rounded-full border border-[#8a93a0] bg-[#242f3b] text-[11px] leading-none">
                        1
                    </span>
                </button>
                <div className="h-10 w-[6px] border-l border-[#6f7887]" />
            </div>
        </footer>
    );
}

export default function App() {
    return (
        <div className="relative flex h-screen flex-col overflow-hidden bg-white font-[Roboto,sans-serif] text-xs text-black">
            <Gradients />
            <TitleBar />
            <MenuBar />
            <MainToolbar />
            <CategoryBar />
            <Workspace />
            <Taskbar />
        </div>
    );
}
